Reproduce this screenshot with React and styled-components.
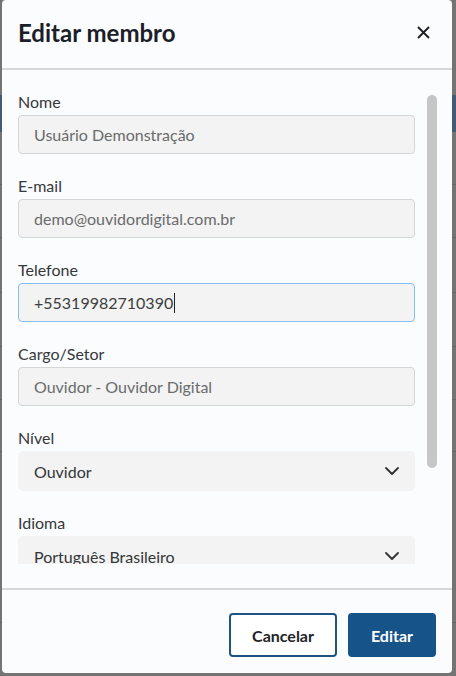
import React from "react";
import styled, { createGlobalStyle } from "styled-components";

const GlobalStyle = createGlobalStyle`
  html, body {
    margin: 0;
    height: 100%;
  }
  body {
    background: #747474;
    font-family: Lato, "Noto Sans", sans-serif;
    overflow: hidden;
  }
  * {
    box-sizing: border-box;
  }
`;

const backdropRows = [
  { height: 95 },
  { height: 37, highlight: true },
  { height: 53, line: true },
  { height: 53, line: true },
  { height: 55, line: true },
  { height: 54, line: true },
  { height: 53, line: true },
  { height: 52, line: true },
  { height: 171, line: true },
];

const fields = [
  { label: "Nome", value: "Usuário Demonstração", disabled: true },
  { label: "E-mail", value: "demo@ouvidordigital.com.br", disabled: true },
  { label: "Telefone", value: "+55319982710390", focused: true },
  { label: "Cargo/Setor", value: "Ouvidor - Ouvidor Digital", disabled: true },
  { label: "Nível", value: "Ouvidor", select: true },
  { label: "Idioma", value: "Português Brasileiro", select: true },
];

function Chevron() {
  return (
    <svg width="14" height="8" viewBox="0 0 14 8" fill="none">
      <polyline
        points="1,1 7,7 13,1"
        stroke="#333"
        strokeWidth="1.8"
        strokeLinecap="round"
        strokeLinejoin="round"
      />
    </svg>
  );
}

function CloseIcon() {
  return (
    <svg width="13" height="13" viewBox="0 0 13 13" fill="none">
      <path d="M1 1L12 12M12 1L1 12" stroke="#1b2027" strokeWidth="1.9" />
    </svg>
  );
}

function Field({ field }) {
  return (
    <StyledField>
      <StyledLabel>{field.label}</StyledLabel>
      {field.select ? (
        <StyledSelect>
          <span>{field.value}</span>
          <Chevron />
        </StyledSelect>
      ) : (
        <StyledInputBox $disabled={field.disabled} $focused={field.focused}>
          {field.value}
          {field.focused && <StyledCaret />}
        </StyledInputBox>
      )}
    </StyledField>
  );
}

export default function App() {
  return (
    <>
      <GlobalStyle />
      <StyledBackdrop>
        {backdropRows.map((row, i) => (
          <StyledBackdropRow
            key={i}
            $height={row.height}
            $highlight={row.highlight}
            $line={row.line}
          />
        ))}
      </StyledBackdrop>

      <StyledModal>
        <StyledHeader>
          <StyledTitle>Editar membro</StyledTitle>
          <StyledClose aria-label="Fechar">
            <CloseIcon />
          </StyledClose>
        </StyledHeader>

        <StyledBody>
          <StyledScroll>
            {fields.map((field) => (
              <Field key={field.label} field={field} />
            ))}
          </StyledScroll>
          <StyledTrack>
            <StyledThumb />
          </StyledTrack>
        </StyledBody>

        <StyledFooter>
          <StyledButton>Cancelar</StyledButton>
          <StyledButton $primary>Editar</StyledButton>
        </StyledFooter>
      </StyledModal>
    </>
  );
}

const StyledBackdrop = styled.div`
  display: flex;
  flex-direction: column;
  height: 676px;
  background: #747474;
`;

const StyledBackdropRow = styled.div`
  height: ${({ $height }) => $height}px;
  flex-shrink: 0;
  background: ${({ $highlight }) => ($highlight ? "#435c75" : "transparent")};
  border-bottom: ${({ $line }) => ($line ? "1px solid #676767" : "none")};
`;

const StyledModal = styled.div`
  position: absolute;
  top: 0;
  left: 2px;
  width: 450px;
  height: 673px;
  background: #fbfcfe;
  border-radius: 4px;
  display: flex;
  flex-direction: column;
  overflow: hidden;
`;

const StyledHeader = styled.div`
  height: 70px;
  flex-shrink: 0;
  display: flex;
  align-items: center;
  justify-content: space-between;
  padding: 0 22px 3px 16px;
  border-bottom: 2px solid #d6d7d9;
`;

const StyledTitle = styled.h2`
  margin: 0;
  font-size: 24px;
  font-weight: 700;
  color: #1b2027;
`;

const StyledClose = styled.button`
  border: none;
  background: none;
  padding: 0;
  width: 13px;
  height: 13px;
  display: flex;
  cursor: pointer;
`;

const StyledBody = styled.div`
  flex: 1;
  min-height: 0;
  display: flex;
  gap: 12px;
  padding: 23px 15px 24px 16px;
`;

const StyledScroll = styled.div`
  flex: 1;
  min-width: 0;
  overflow: hidden;
`;

const StyledTrack = styled.div`
  width: 10px;
  flex-shrink: 0;
  padding-top: 2px;
`;

const StyledThumb = styled.div`
  height: 373px;
  background: #c6c6c6;
  border-radius: 5px;
`;

const StyledField = styled.div`
  display: flex;
  flex-direction: column;
  margin-bottom: 23px;

  &:last-child {
    margin-bottom: 0;
  }
`;

const StyledLabel = styled.label`
  font-size: 16px;
  line-height: 18px;
  color: #36383a;
  margin-bottom: 4px;
`;

const StyledInputBox = styled.div`
  height: 39px;
  display: flex;
  align-items: center;
  padding: 0 15px;
  font-size: 16px;
  color: ${({ $disabled }) => ($disabled ? "#6a6b6c" : "#3c3e40")};
  background: #f2f3f2;
  border: 1px solid ${({ $focused }) => ($focused ? "#86bdf0" : "#d4d5d5")};
  border-radius: 4px;
`;

const StyledCaret = styled.span`
  width: 1px;
  height: 20px;
  margin-left: 1px;
  background: #222;
`;

const StyledSelect = styled.div`
  height: 40px;
  display: flex;
  align-items: center;
  justify-content: space-between;
  padding: 0 16px;
  background: #f2f3f2;
  border-radius: 5px;
  font-size: 16px;
  color: #343638;
`;

const StyledFooter = styled.div`
  flex-shrink: 0;
  display: flex;
  justify-content: flex-end;
  gap: 11px;
  padding: 23px 16px 16px;
  border-top: 2px solid #d6d7d9;
`;

const StyledButton = styled.button`
  height: 44px;
  min-width: ${({ $primary }) => ($primary ? "88px" : "108px")};
  padding: 0 16px;
  font-family: inherit;
  font-size: 16px;
  font-weight: 700;
  border-radius: 4px;
  cursor: pointer;
  color: ${({ $primary }) => ($primary ? "#ffffff" : "#222426")};
  background: ${({ $primary }) => ($primary ? "#165389" : "#ffffff")};
  border: 2px solid ${({ $primary }) => ($primary ? "#165389" : "#1f5384")};
`;
